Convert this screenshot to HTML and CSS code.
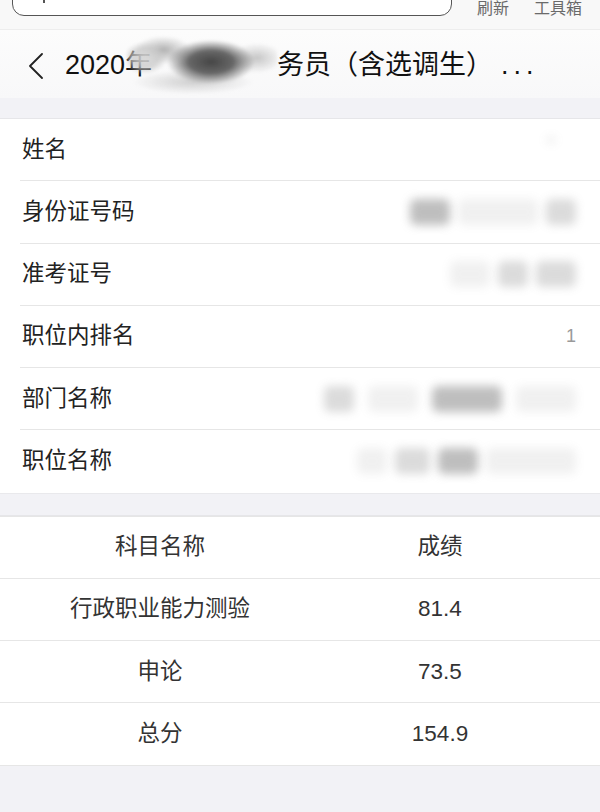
FILE: index.html
```html
<!DOCTYPE html>
<html lang="zh-CN">
  <head>
    <meta charset="UTF-8" />
    <meta name="viewport" content="width=device-width, initial-scale=1.0" />
    <title>成绩查询</title>
    <link rel="stylesheet" href="styles.css">
  </head>
  <body>
    <div class="toolbar">
      <div class="search"><span class="search-mark"></span></div>
      <div class="tools">
        <span>刷新</span>
        <span>工具箱</span>
      </div>
    </div>

    <div class="navbar">
      <svg class="back" width="16" height="26" viewBox="0 0 16 26">
        <path d="M14 1 L2 13 L14 25" fill="none" stroke="#222" stroke-width="1.8" stroke-linecap="round" stroke-linejoin="round" />
      </svg>
      <h1 class="title">2020年<span class="redact"></span>务员（含选调生）<span class="dots">...</span></h1>
    </div>

    <div class="band"></div>

    <div class="info">
      <div class="row">
        <span class="label">姓名</span>
        <span class="value"><span class="sm w10 o1 up"></span></span>
      </div>
      <div class="row">
        <span class="label">身份证号码</span>
        <span class="value"><span class="sm w40 o3"></span><span class="sm w80 o1"></span><span class="sm w30 o2"></span></span>
      </div>
      <div class="row">
        <span class="label">准考证号</span>
        <span class="value"><span class="sm w40 o1"></span><span class="sm w30 o2"></span><span class="sm w40 o2"></span></span>
      </div>
      <div class="row">
        <span class="label">职位内排名</span>
        <span class="value rank">1</span>
      </div>
      <div class="row">
        <span class="label">部门名称</span>
        <span class="value wide"><span class="sm w30 o2"></span><span class="sm w50 o1"></span><span class="sm w70 o3"></span><span class="sm w60 o1"></span></span>
      </div>
      <div class="row">
        <span class="label">职位名称</span>
        <span class="value"><span class="sm w30 o1"></span><span class="sm w35 o2"></span><span class="sm w40 o3"></span><span class="sm w90 o1"></span></span>
      </div>
    </div>

    <div class="band short"></div>

    <div class="scores">
      <div class="score-row">
        <span>科目名称</span>
        <span>成绩</span>
      </div>
      <div class="score-row">
        <span>行政职业能力测验</span>
        <span>81.4</span>
      </div>
      <div class="score-row">
        <span>申论</span>
        <span>73.5</span>
      </div>
      <div class="score-row">
        <span>总分</span>
        <span>154.9</span>
      </div>
    </div>
  </body>
</html>
```

FILE: styles.css
```css
body {
  margin: 0;
  background: #f2f2f6;
  font-family: "Liberation Sans", "Noto Sans CJK SC", sans-serif;
  color: #222;
  overflow: hidden;
}
.toolbar {
  display: flex;
  align-items: flex-start;
  height: 29px;
  background: #f8f8f8;
  border-bottom: 1px solid #ededed;
}
.search {
  display: flex;
  box-sizing: border-box;
  width: 440px;
  height: 40px;
  margin: -24px 0 0 12px;
  border: 1.5px solid #555;
  border-radius: 12px;
  background: #fff;
}
.search-mark {
  width: 2px;
  height: 4px;
  margin: 22px 0 0 30px;
  background: #555;
}
.tools {
  display: flex;
  gap: 25px;
  margin: 1px 0 0 25px;
  font-size: 16px;
  line-height: 16px;
  color: #6a6a6a;
}
.navbar {
  display: flex;
  align-items: center;
  height: 68px;
  padding: 3px 0 0 28px;
  box-sizing: border-box;
  background: linear-gradient(#fcfcfc, #f8f8f9);
}
.back {
  flex: none;
  margin-right: 21px;
}
.title {
  margin: 0;
  font-size: 27px;
  font-weight: normal;
  line-height: 30px;
  color: #111;
  white-space: nowrap;
}
.dots {
  margin-left: 8px;
  letter-spacing: 5px;
}
.redact {
  display: inline-block;
  vertical-align: middle;
  width: 150px;
  height: 60px;
  margin: -15px 0 -15px -25px;
  background:
    radial-gradient(44px 22px at 84px 26px, rgba(60, 60, 60, 0.95), rgba(75, 75, 75, 0.85) 50%, transparent),
    radial-gradient(22px 16px at 18px 22px, rgba(215, 215, 215, 0.95), rgba(200, 200, 200, 0.75) 60%, transparent),
    radial-gradient(28px 14px at 36px 14px, rgba(150, 150, 150, 0.75), transparent),
    radial-gradient(26px 15px at 130px 22px, rgba(170, 170, 170, 0.65), transparent),
    radial-gradient(60px 12px at 66px 46px, rgba(185, 185, 185, 0.65), transparent);
  filter: blur(1.5px);
}
.band {
  height: 20px;
  border-bottom: 1px solid #e6e6e9;
}
.band.short {
  height: 21px;
  border-top: 1px solid #e9e9ec;
}
.info {
  background: #fff;
}
.row {
  display: flex;
  align-items: center;
  height: 62.25px;
  box-sizing: border-box;
  margin-left: 20px;
  padding: 0 24px 0 2px;
  border-bottom: 1px solid #e6e6e6;
}
.row:last-child {
  border-bottom: none;
}
.label {
  font-size: 22.5px;
  line-height: 30px;
  color: #222;
}
.value {
  display: flex;
  align-items: center;
  gap: 8px;
  margin-left: auto;
}
.value.wide {
  gap: 14px;
}
.rank {
  font-size: 18px;
  color: #9a9a9a;
}
.sm {
  display: inline-block;
  height: 26px;
  border-radius: 6px;
  background: #8a8a8a;
  filter: blur(5px);
}
.sm.up {
  height: 8px;
  margin: -20px 20px 0 0;
}
.w10 { width: 10px; }
.w30 { width: 30px; }
.w35 { width: 35px; }
.w40 { width: 40px; }
.w50 { width: 50px; }
.w60 { width: 60px; }
.w70 { width: 70px; }
.w80 { width: 80px; }
.w90 { width: 90px; }
.o1 { opacity: 0.12; }
.o2 { opacity: 0.3; }
.o3 { opacity: 0.55; }
.scores {
  background: #fff;
  border-top: 1px solid #e6e6e6;
}
.score-row {
  display: grid;
  grid-template-columns: 1fr 1fr;
  align-items: center;
  height: 62.25px;
  box-sizing: border-box;
  padding: 0 20px;
  border-bottom: 1px solid #e6e6e6;
  font-size: 22.5px;
  line-height: 30px;
  color: #333;
  text-align: center;
}
```
